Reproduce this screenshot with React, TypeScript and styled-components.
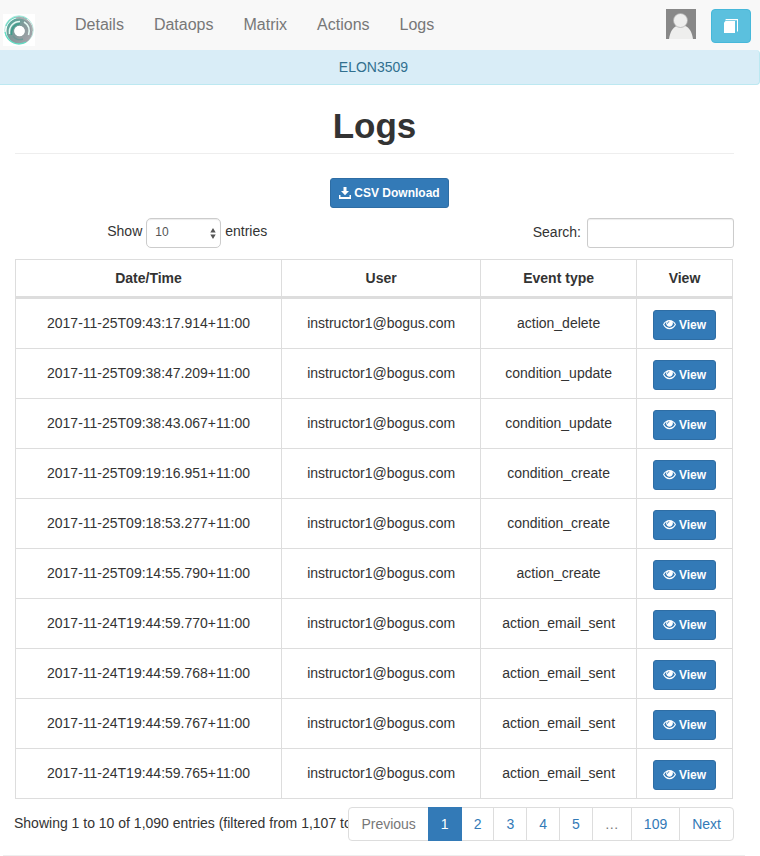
import React from "react";
import styled, { createGlobalStyle, css } from "styled-components";

const GlobalStyle = createGlobalStyle`
  *, *::before, *::after { box-sizing: border-box; }
  body {
    margin: 0;
    background: #fff;
    color: #333;
    font-family: "Liberation Sans", Arial, Helvetica, sans-serif;
    font-size: 14px;
    line-height: 20px;
  }
`;

const Navbar = styled.header`
  display: flex;
  align-items: flex-start;
  height: 50px;
  padding: 0 9px 0 3px;
  background: #f8f8f8;
`;

const Brand = styled.a`
  display: block;
  width: 32px;
  height: 32px;
  margin: 14px 25px 0 0;
  background: #fff;
  svg { display: block; }
`;

const NavLinks = styled.nav`
  display: flex;
  flex: 1;
`;

const NavLink = styled.a`
  padding: 15px;
  color: #777;
  font-size: 16px;
  text-decoration: none;
`;

const Account = styled.div`
  display: flex;
  gap: 15px;
  padding-top: 9px;
`;

const Avatar = styled.svg`
  display: block;
`;

const InfoButton = styled.button`
  display: flex;
  align-items: center;
  justify-content: center;
  width: 40px;
  height: 34px;
  padding: 0;
  border: 1px solid #46b8da;
  border-radius: 4px;
  background: #5bc0de;
`;

const CourseBanner = styled.div`
  padding: 7px 12px 7px 0;
  border: 1px solid #bce8f1;
  border-width: 0 1px 1px 0;
  border-radius: 0 4px 4px 0;
  background: #d9edf7;
  color: #31708f;
  text-align: center;
`;

const Content = styled.main`
  padding: 0 26px 0 15px;
`;

const PageHeader = styled.div`
  padding: 20px 0 7px;
  border-bottom: 1px solid #eee;
`;

const Title = styled.h1`
  margin: 0;
  font-size: 35px;
  font-weight: bold;
  line-height: 41px;
  text-align: center;
`;

const Actions = styled.div`
  display: flex;
  justify-content: center;
  padding: 24px 0 10px 30px;
`;

const primaryButton = css`
  display: inline-flex;
  align-items: center;
  justify-content: center;
  gap: 3px;
  height: 30px;
  border: 1px solid #2e6da4;
  border-radius: 3px;
  background: #337ab7;
  color: #fff;
  font-size: 12px;
  font-weight: bold;
  line-height: 18px;
  text-decoration: none;
`;

const DownloadLink = styled.a`
  ${primaryButton}
  padding: 0 8px;
`;

const ViewButton = styled.button`
  ${primaryButton}
  padding: 0 9px;
  font-family: inherit;
`;

const Controls = styled.div`
  display: grid;
  grid-template-columns: 1fr 1fr;
  margin: 0 -15px 11px;
`;

const LengthLabel = styled.label`
  display: flex;
  justify-content: center;
  gap: 4px;
  line-height: 26px;
`;

const SearchLabel = styled.label`
  display: flex;
  justify-content: flex-end;
  gap: 6px;
  padding-right: 15px;
  line-height: 28px;
`;

const SelectWrap = styled.span`
  position: relative;
  display: block;
  svg {
    position: absolute;
    right: 5px;
    top: 10px;
    pointer-events: none;
  }
`;

const fieldStyle = css`
  height: 30px;
  border: 1px solid #ccc;
  background: #fff;
  box-shadow: inset 0 1px 1px rgba(0, 0, 0, 0.075);
  color: #555;
  font-family: inherit;
  font-size: 12px;
`;

const Select = styled.select`
  ${fieldStyle}
  display: block;
  appearance: none;
  width: 75px;
  padding: 0 8px 2px;
  border-radius: 5px;
`;

const SearchInput = styled.input`
  ${fieldStyle}
  width: 147px;
  padding: 5px 10px;
  border-radius: 3px;
`;

const Table = styled.table`
  width: calc(100% - 1px);
  border-collapse: separate;
  border-spacing: 0;
  border: 1px solid #ddd;
  border-width: 1px 0 0 1px;
  table-layout: fixed;
  text-align: center;
`;

const Col = styled.col<{ $share: number }>`
  width: ${(p) => p.$share}%;
`;

const HeadCell = styled.th`
  padding: 8px;
  border: 0 solid #ddd;
  border-width: 0 1px 3px 0;
`;

const Cell = styled.td<{ $action?: boolean }>`
  height: 50px;
  padding: ${(p) => (p.$action ? "11px 8px 8px" : "14px 8px 15px")};
  border: 0 solid #ddd;
  border-width: 0 1px 1px 0;
  line-height: 20px;
  vertical-align: top;
  & > button { vertical-align: top; }
`;

const TableFooter = styled.div`
  display: flex;
  align-items: flex-start;
  margin: 8px 0 0 -1px;
`;

const Summary = styled.div`
  flex: 1;
  min-width: 0;
  padding-top: 6px;
  overflow: hidden;
  white-space: nowrap;
`;

const Pagination = styled.ul`
  display: flex;
  margin: 0;
  padding: 0 0 0 1px;
  list-style: none;
`;

const PageItem = styled.li`
  margin-left: -1px;
  &:first-child > * { border-radius: 4px 0 0 4px; }
  &:last-child > * { border-radius: 0 4px 4px 0; }
`;

const pageBox = css`
  display: block;
  padding: 6px 12px;
  border: 1px solid #ddd;
  background: #fff;
`;

const PageLink = styled.a<{ $active?: boolean }>`
  ${pageBox}
  color: #337ab7;
  text-decoration: none;
  ${(p) =>
    p.$active &&
    css`
      position: relative;
      border-color: #337ab7;
      background: #337ab7;
      color: #fff;
    `}
`;

const PageText = styled.span`
  ${pageBox}
  color: #777;
`;

const FooterRule = styled.hr`
  margin: 14px 15px 0 3px;
  border: 0;
  border-top: 1px solid #eee;
`;

const Logo = () => (
  <svg width="32" height="32" viewBox="0 0 32 32" fill="none" aria-hidden="true">
    <defs>
      <linearGradient id="swirl" x1="5" y1="8" x2="26" y2="26" gradientUnits="userSpaceOnUse">
        <stop offset="0" stopColor="#55aa9c" />
        <stop offset=".5" stopColor="#84999a" />
        <stop offset="1" stopColor="#a3a3a9" />
      </linearGradient>
    </defs>
    <circle cx="16" cy="16" r="14.3" stroke="#b9ebe1" strokeWidth="1" />
    <circle cx="16.5" cy="17" r="9" stroke="url(#swirl)" strokeWidth="8" />
    <path d="M3 12C6 4 15 0 24 5" stroke="#6fd9c5" strokeWidth="1.2" />
    <path d="M2 18C4 27 13 33 23 28" stroke="#5fdcc2" strokeWidth="1.2" />
    <path d="M13 4C21 2 29 8 29 17" stroke="#a8aeb0" strokeWidth="1.6" />
    <path d="M6.500 20C5.500 12 11 7.500 17 7.500" stroke="#e4faf4" strokeWidth="1.5" />
    <path d="M8.500 21C8 14 12 10 17 9.500" stroke="#3f9d8c" strokeWidth="1.6" />
    <path d="M21 8C26 11 27 16 25.500 21" stroke="#e4faf4" strokeWidth="1.5" />
    <path d="M10 22C12 25 16 26.500 20 25" stroke="#6e9a98" strokeWidth="1.5" />
    <circle cx="16.500" cy="17" r="5.300" fill="#fff" />
  </svg>
);

const BookIcon = () => (
  <svg width="14" height="15" viewBox="0 0 14 15" aria-hidden="true">
    <path fill="#fff" d="M2 0h12v12l-1 1V1.200H1z" />
    <path fill="#fff" d="M1.500 2H11v12H0V3.500z" />
  </svg>
);

const DownloadIcon = () => (
  <svg width="12" height="12" viewBox="0 0 12 12" fill="#fff" aria-hidden="true">
    <path d="M4.500 0h3v4H10L6 8.300 2 4h2.500z" />
    <path d="M0 8h1.500v2h9V8H12v4H0z" />
  </svg>
);

const EyeIcon = () => (
  <svg width="13" height="12" viewBox="0 0 13 12" aria-hidden="true">
    <path fill="#fff" d="M0 5.500C1.500 2.500 3.800 1 6.500 1S11.500 2.500 13 5.500C11.500 8.600 9.300 10.200 6.500 10.200S1.500 8.600 0 5.500z" />
    <path fill="#337ab7" d="M1.200 5.600C1.800 4.400 2.600 3.400 3.400 2.800a3.700 3.700 0 0 0-.2 2.300c.4 1.700 1.700 2.600 3.300 2.600s2.900-.9 3.300-2.600a3.700 3.700 0 0 0-.2-2.300c.9.600 1.600 1.600 2.200 2.800C10.500 8 8.600 8.900 6.500 8.900S2.500 8 1.200 5.600z" />
    <path fill="none" stroke="#337ab7" d="M4.500 4.600c0-1.100.7-1.800 1.800-1.800" />
  </svg>
);

const SelectArrows = () => (
  <svg width="6" height="11" viewBox="0 0 6 11" fill="#555" aria-hidden="true">
    <path d="M3 0 5.700 4.500H.3zM3 11l2.700-4.500H.3z" />
  </svg>
);

const navItems = ["Details", "Dataops", "Matrix", "Actions", "Logs"];

const rows: [string, string][] = [
  ["2017-11-25T09:43:17.914+11:00", "action_delete"],
  ["2017-11-25T09:38:47.209+11:00", "condition_update"],
  ["2017-11-25T09:38:43.067+11:00", "condition_update"],
  ["2017-11-25T09:19:16.951+11:00", "condition_create"],
  ["2017-11-25T09:18:53.277+11:00", "condition_create"],
  ["2017-11-25T09:14:55.790+11:00", "action_create"],
  ["2017-11-24T19:44:59.770+11:00", "action_email_sent"],
  ["2017-11-24T19:44:59.768+11:00", "action_email_sent"],
  ["2017-11-24T19:44:59.767+11:00", "action_email_sent"],
  ["2017-11-24T19:44:59.765+11:00", "action_email_sent"],
];

const pages = ["1", "2", "3", "4", "5", "…", "109", "Next"];

export default function App() {
  return (
    <>
      <GlobalStyle />
      <Navbar>
        <Brand href="#" aria-label="Home">
          <Logo />
        </Brand>
        <NavLinks>
          {navItems.map((item) => (
            <NavLink key={item} href="#">{item}</NavLink>
          ))}
        </NavLinks>
        <Account>
          <Avatar width="30" height="30" viewBox="0 0 30 30" role="img" aria-label="User">
            <path fill="#888" d="M0 0h30v30H0z" />
            <path fill="#eeeeed" d="M3 30C4 23 7 18 11 17h8c4 1 7 6 8 13z" />
            <circle cx="14.500" cy="11.500" r="7" fill="#eeeeed" stroke="#aaa" strokeWidth=".7" />
          </Avatar>
          <InfoButton type="button" aria-label="Documentation">
            <BookIcon />
          </InfoButton>
        </Account>
      </Navbar>
      <CourseBanner>ELON3509</CourseBanner>
      <Content>
        <PageHeader>
          <Title>Logs</Title>
        </PageHeader>
        <Actions>
          <DownloadLink href="#">
            <DownloadIcon />
            CSV Download
          </DownloadLink>
        </Actions>
        <Controls>
          <LengthLabel>
            Show
            <SelectWrap>
              <Select defaultValue="10">
                <option>10</option>
                <option>25</option>
                <option>50</option>
                <option>100</option>
              </Select>
              <SelectArrows />
            </SelectWrap>
            entries
          </LengthLabel>
          <SearchLabel>
            Search:
            <SearchInput type="search" />
          </SearchLabel>
        </Controls>
        <Table>
          <colgroup>
            <Col $share={37.1} />
            <Col $share={27.8} />
            <Col $share={21.7} />
            <Col $share={13.4} />
          </colgroup>
          <thead>
            <tr>
              <HeadCell scope="col">Date/Time</HeadCell>
              <HeadCell scope="col">User</HeadCell>
              <HeadCell scope="col">Event type</HeadCell>
              <HeadCell scope="col">View</HeadCell>
            </tr>
          </thead>
          <tbody>
            {rows.map(([time, event]) => (
              <tr key={time}>
                <Cell>{time}</Cell>
                <Cell>instructor1@bogus.com</Cell>
                <Cell>{event}</Cell>
                <Cell $action>
                  <ViewButton type="button">
                    <EyeIcon />
                    View
                  </ViewButton>
                </Cell>
              </tr>
            ))}
          </tbody>
        </Table>
        <TableFooter>
          <Summary>Showing 1 to 10 of 1,090 entries (filtered from 1,107 total entries)</Summary>
          <Pagination aria-label="Pagination">
            <PageItem>
              <PageText>Previous</PageText>
            </PageItem>
            {pages.map((page) => (
              <PageItem key={page}>
                {page === "…" ? (
                  <PageText>{page}</PageText>
                ) : (
                  <PageLink href="#" $active={page === "1"} aria-current={page === "1" ? "page" : undefined}>
                    {page}
                  </PageLink>
                )}
              </PageItem>
            ))}
          </Pagination>
        </TableFooter>
      </Content>
      <FooterRule />
    </>
  );
}
